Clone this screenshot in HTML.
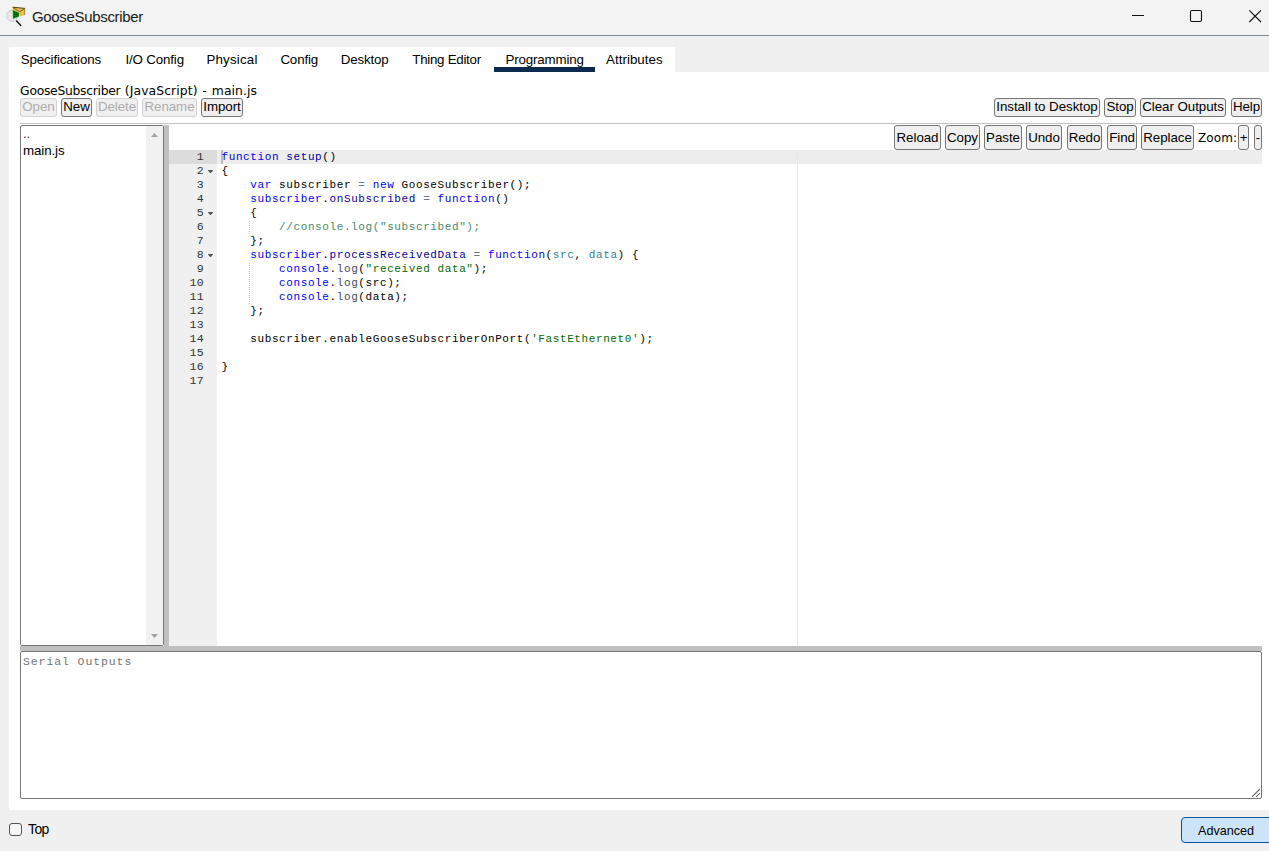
<!DOCTYPE html>
<html>
<head>
<meta charset="utf-8">
<title>GooseSubscriber</title>
<style>
html,body{margin:0;padding:0;}
body{width:1269px;height:851px;overflow:hidden;background:#f0f0f0;position:relative;font-family:"Liberation Sans",Arial,sans-serif;font-size:13px;color:#000;}
.abs{position:absolute;}
#titlebar{left:0;top:0;width:1269px;height:35px;background:#f3f3f3;}
#titleline{left:0;top:35px;width:1269px;height:1px;background:#828a97;}
#title{left:32px;top:7px;font-size:15px;letter-spacing:-0.33px;line-height:20px;white-space:nowrap;color:#1a1a1a;}
#pane{left:9px;top:72px;width:1260px;height:738px;background:#fff;}
#tabs{left:9px;top:47px;height:25px;width:666px;background:#fff;}
.tab{position:absolute;top:0;height:25px;line-height:25px;font-size:13.33px;letter-spacing:-0.15px;white-space:nowrap;}
#tabul{left:494px;top:67px;width:101px;height:5px;background:#0d2a4f;}
#flabel{left:20px;top:83px;font-family:"DejaVu Sans","Liberation Sans",sans-serif;font-size:12.36px;line-height:16px;white-space:nowrap;}
.btn{position:absolute;box-sizing:border-box;border:1px solid #767676;border-radius:3px;background:#efefef;color:#000;font-size:13.33px;letter-spacing:-0.05px;text-align:center;white-space:nowrap;padding:0;}
.r1{top:98px;height:19px;line-height:16px;}
.r2{top:125px;height:25px;line-height:23px;}
.dis{color:#adadad;border-color:#d2d2d2;background:#f0f0f0;}
#flabel .w{position:absolute;top:0;}
#hr{left:20px;top:123px;width:1242px;height:1px;background:#c4c4c4;}
#list{left:20px;top:125px;width:144px;height:521px;box-sizing:border-box;border:1px solid #767676;border-radius:2px;background:#fff;}
#track{left:146px;top:126px;width:17px;height:519px;background:#f1f1f1;}
.li{position:absolute;left:23px;font-size:13.33px;letter-spacing:-0.1px;line-height:15px;white-space:nowrap;}
#vsplit{left:164px;top:125px;width:5px;height:526px;background:#c0c0c0;}
#hsplit{left:20px;top:646px;width:1242px;height:5px;background:#c0c0c0;}
#gutter{left:169px;top:150px;width:48px;height:496px;background:#f0f0f0;}
#gact{left:169px;top:150px;width:48px;height:14px;background:#dcdcdc;}
#lact{left:217px;top:150px;width:1045px;height:14px;background:rgba(0,0,0,0.07);}
#pm{left:797px;top:150px;width:1px;height:496px;background:#e8e8e8;}
#cursor{left:221px;top:150px;width:2px;height:14px;background:#bcbcbc;}
.ln{position:absolute;left:169px;width:35px;text-align:right;font-family:"Liberation Mono","Courier New",monospace;font-size:11.5px;letter-spacing:0.3px;line-height:14px;height:14px;color:#333;}
.cl{position:absolute;left:221.5px;font-family:"Liberation Mono","Courier New",monospace;font-size:11px;letter-spacing:0.6px;line-height:14px;height:14px;white-space:pre;color:#000;}
.k{color:#0000ff;}
.f{color:#0000a2;}
.o{color:#687687;}
.v{color:#318495;}
.s{color:#036a07;}
.c{color:#4c886b;}
.sf{color:#3c4c72;}
.fold{position:absolute;left:207.6px;width:5.8px;height:3.4px;background:#555;clip-path:polygon(0 0,100% 0,50% 100%);}
.ig{position:absolute;left:249px;width:1px;height:14px;background:repeating-linear-gradient(to bottom,transparent 0,transparent 1px,#c3c3c3 1px,#c3c3c3 2px);}
#out{left:20px;top:651px;width:1242px;height:148px;box-sizing:border-box;border:1px solid #767676;border-radius:2px;background:#fff;}
#ph{left:23px;top:654px;font-family:"Liberation Mono","Courier New",monospace;font-size:11.5px;letter-spacing:0.9px;line-height:15px;color:#757575;white-space:pre;}
#cb{left:9px;top:823px;width:13px;height:13px;box-sizing:border-box;border:1px solid #555;border-radius:3px;background:#f6f6f6;}
#top{left:28px;top:821px;font-size:14px;letter-spacing:-0.6px;line-height:16px;white-space:nowrap;}
#adv{left:1181px;top:817px;width:100px;height:26px;box-sizing:border-box;border:1px solid #00559b;border-radius:4px;background:#cce4f7;}
#advt{left:1198px;top:823px;font-size:12.6px;line-height:16px;white-space:nowrap;}
</style>
</head>
<body>
<div id="titlebar" class="abs"></div>
<div id="titleline" class="abs"></div>
<svg class="abs" style="left:0;top:0" width="32" height="32" viewBox="0 0 32 32">
  <circle cx="12.2" cy="15.8" r="5.7" fill="#e8e8e8" stroke="#cdcdcd" stroke-width="0.9"/>
  <line x1="16.6" y1="21" x2="20.8" y2="25.4" stroke="#111" stroke-width="1.4" stroke-linecap="round"/>
  <polygon points="12.6,7.1 24.9,8.3 24.9,15.1 19.7,16.5 18.8,12.5 12.6,10.2" fill="#ecbd52"/>
  <polyline points="13,7.6 19.6,11.7 24.7,8.8" fill="none" stroke="#5e4c1c" stroke-width="0.8"/>
  <line x1="12.6" y1="7.2" x2="24.9" y2="8.4" stroke="#3f3412" stroke-width="0.9"/>
  <line x1="24.7" y1="8.4" x2="24.7" y2="15.1" stroke="#7a6426" stroke-width="0.6"/>
  <path d="M12.7 10.1 L18.7 12.5 C19.3 14.3 19.3 15.6 18.8 16.8 L12.9 19 Z" fill="#0a9b11"/>
  <g fill="#022a02"><rect x="13.9" y="11.6" width="1" height="1.2"/><rect x="15.7" y="12.2" width="1" height="1.2"/><rect x="17.4" y="12.9" width="0.9" height="1.1"/><rect x="13.9" y="13.7" width="1" height="1.2"/><rect x="15.7" y="14" width="1" height="1.2"/><rect x="17.4" y="14.4" width="0.9" height="1.1"/><rect x="13.9" y="15.8" width="1" height="1.2"/><rect x="15.7" y="15.7" width="1" height="1.2"/></g>
</svg>
<div id="title" class="abs">GooseSubscriber</div>
<svg class="abs" style="left:1120px;top:0" width="149" height="35" viewBox="0 0 149 35">
  <line x1="12" y1="15.5" x2="24" y2="15.5" stroke="#111" stroke-width="1"/>
  <rect x="70.5" y="10.5" width="11" height="11" rx="1.5" fill="none" stroke="#111" stroke-width="1.1"/>
  <path d="M129.3 10.3 L141 22 M141 10.3 L129.3 22" stroke="#111" stroke-width="1.1" fill="none"/>
</svg>

<div id="tabs" class="abs">
  <div class="tab" style="left:11.8px">Specifications</div>
  <div class="tab" style="left:116.4px">I/O Config</div>
  <div class="tab" style="left:197.4px;letter-spacing:0.19px">Physical</div>
  <div class="tab" style="left:271.4px">Config</div>
  <div class="tab" style="left:331.7px">Desktop</div>
  <div class="tab" style="left:403.3px;letter-spacing:-0.28px">Thing Editor</div>
  <div class="tab" style="left:496.4px">Programming</div>
  <div class="tab" style="left:597.0px;letter-spacing:0.04px">Attributes</div>
</div>
<div id="pane" class="abs"></div>
<div id="tabul" class="abs"></div>

<div id="flabel" class="abs"><span class="w" style="left:0.1px;letter-spacing:-0.29px">GooseSubscriber</span> <span class="w" style="left:104.8px;letter-spacing:0.1px">(JavaScript)</span> <span class="w" style="left:182.3px">-</span> <span class="w" style="left:191.8px;letter-spacing:0.07px">main.js</span></div>

<div class="btn r1 dis" style="left:20px;width:37px">Open</div>
<div class="btn r1" style="left:61px;width:31px">New</div>
<div class="btn r1 dis" style="left:96px;width:42px">Delete</div>
<div class="btn r1 dis" style="left:142px;width:55px">Rename</div>
<div class="btn r1" style="left:201px;width:42px">Import</div>

<div class="btn r1" style="left:994px;width:106px">Install to Desktop</div>
<div class="btn r1" style="left:1104px;width:32px">Stop</div>
<div class="btn r1" style="left:1140px;width:86px">Clear Outputs</div>
<div class="btn r1" style="left:1231px;width:31px">Help</div>

<div id="hr" class="abs"></div>

<div id="list" class="abs"></div>
<div id="track" class="abs"></div>
<svg class="abs" style="left:146px;top:126px" width="17" height="519" viewBox="0 0 17 519">
  <polygon points="5,11 12,11 8.5,7" fill="#a3a3a3"/>
  <polygon points="5,508 12,508 8.5,512" fill="#a3a3a3"/>
</svg>
<div class="li" style="top:126px;color:#333">..</div>
<div class="li" style="top:143px">main.js</div>

<div id="vsplit" class="abs"></div>
<div id="hsplit" class="abs"></div>

<div class="btn r2" style="left:894px;width:47px">Reload</div>
<div class="btn r2" style="left:945px;width:35px">Copy</div>
<div class="btn r2" style="left:984px;width:38px">Paste</div>
<div class="btn r2" style="left:1026px;width:36px">Undo</div>
<div class="btn r2" style="left:1067px;width:35px">Redo</div>
<div class="btn r2" style="left:1107px;width:30px">Find</div>
<div class="btn r2" style="left:1141px;width:53px">Replace</div>
<div class="abs" style="left:1198px;top:130px;font-family:'DejaVu Sans','Liberation Sans',sans-serif;font-size:12px;letter-spacing:0.1px;line-height:16px;white-space:nowrap">Zoom:</div>
<div class="btn r2" style="left:1238px;width:11px">+</div>
<div class="btn r2" style="left:1254px;width:8px">-</div>

<div id="gutter" class="abs"></div>
<div id="gact" class="abs"></div>
<div id="lact" class="abs"></div>
<div id="pm" class="abs"></div>
<div id="cursor" class="abs"></div>
<div id="code">
<div class="ln" style="top:150px">1</div>
<div class="cl" style="top:150px"><span class="k">function</span> <span class="f">setup</span>()</div>
<div class="ln" style="top:164px">2</div>
<div class="cl" style="top:164px">{</div>
<div class="ln" style="top:178px">3</div>
<div class="cl" style="top:178px">    <span class="k">var</span> subscriber <span class="o">=</span> <span class="k">new</span> GooseSubscriber();</div>
<div class="ln" style="top:192px">4</div>
<div class="cl" style="top:192px">    <span class="k">subscriber</span>.<span class="f">onSubscribed</span> <span class="o">=</span> <span class="k">function</span>()</div>
<div class="ln" style="top:206px">5</div>
<div class="cl" style="top:206px">    {</div>
<div class="ln" style="top:220px">6</div>
<div class="cl" style="top:220px">        <span class="c">//console.log(&quot;subscribed&quot;);</span></div>
<div class="ln" style="top:234px">7</div>
<div class="cl" style="top:234px">    };</div>
<div class="ln" style="top:248px">8</div>
<div class="cl" style="top:248px">    <span class="k">subscriber</span>.<span class="f">processReceivedData</span> <span class="o">=</span> <span class="k">function</span>(<span class="v">src</span>, <span class="v">data</span>) {</div>
<div class="ln" style="top:262px">9</div>
<div class="cl" style="top:262px">        <span class="k">console</span>.<span class="sf">log</span>(<span class="s">&quot;received data&quot;</span>);</div>
<div class="ln" style="top:276px">10</div>
<div class="cl" style="top:276px">        <span class="k">console</span>.<span class="sf">log</span>(src);</div>
<div class="ln" style="top:290px">11</div>
<div class="cl" style="top:290px">        <span class="k">console</span>.<span class="sf">log</span>(data);</div>
<div class="ln" style="top:304px">12</div>
<div class="cl" style="top:304px">    };</div>
<div class="ln" style="top:318px">13</div>
<div class="ln" style="top:332px">14</div>
<div class="cl" style="top:332px">    subscriber.enableGooseSubscriberOnPort(<span class="s">&#x27;FastEthernet0&#x27;</span>);</div>
<div class="ln" style="top:346px">15</div>
<div class="ln" style="top:360px">16</div>
<div class="cl" style="top:360px">}</div>
<div class="ln" style="top:374px">17</div>
<div class="fold" style="top:170px"></div>
<div class="fold" style="top:212px"></div>
<div class="fold" style="top:254px"></div>
<div class="ig" style="top:220px"></div>
<div class="ig" style="top:262px"></div>
<div class="ig" style="top:276px"></div>
<div class="ig" style="top:290px"></div>
</div>

<div id="out" class="abs"></div>
<div id="ph" class="abs">Serial Outputs</div>
<svg class="abs" style="left:1248px;top:785px" width="13" height="13" viewBox="0 0 13 13">
  <path d="M11.9 4 L4 11.8 M11.9 8.1 L8.1 11.8" stroke="#666" stroke-width="1.1" fill="none"/>
</svg>

<div id="cb" class="abs"></div>
<div id="top" class="abs">Top</div>
<div id="adv" class="abs"></div>
<div id="advt" class="abs">Advanced</div>
</body>
</html>
